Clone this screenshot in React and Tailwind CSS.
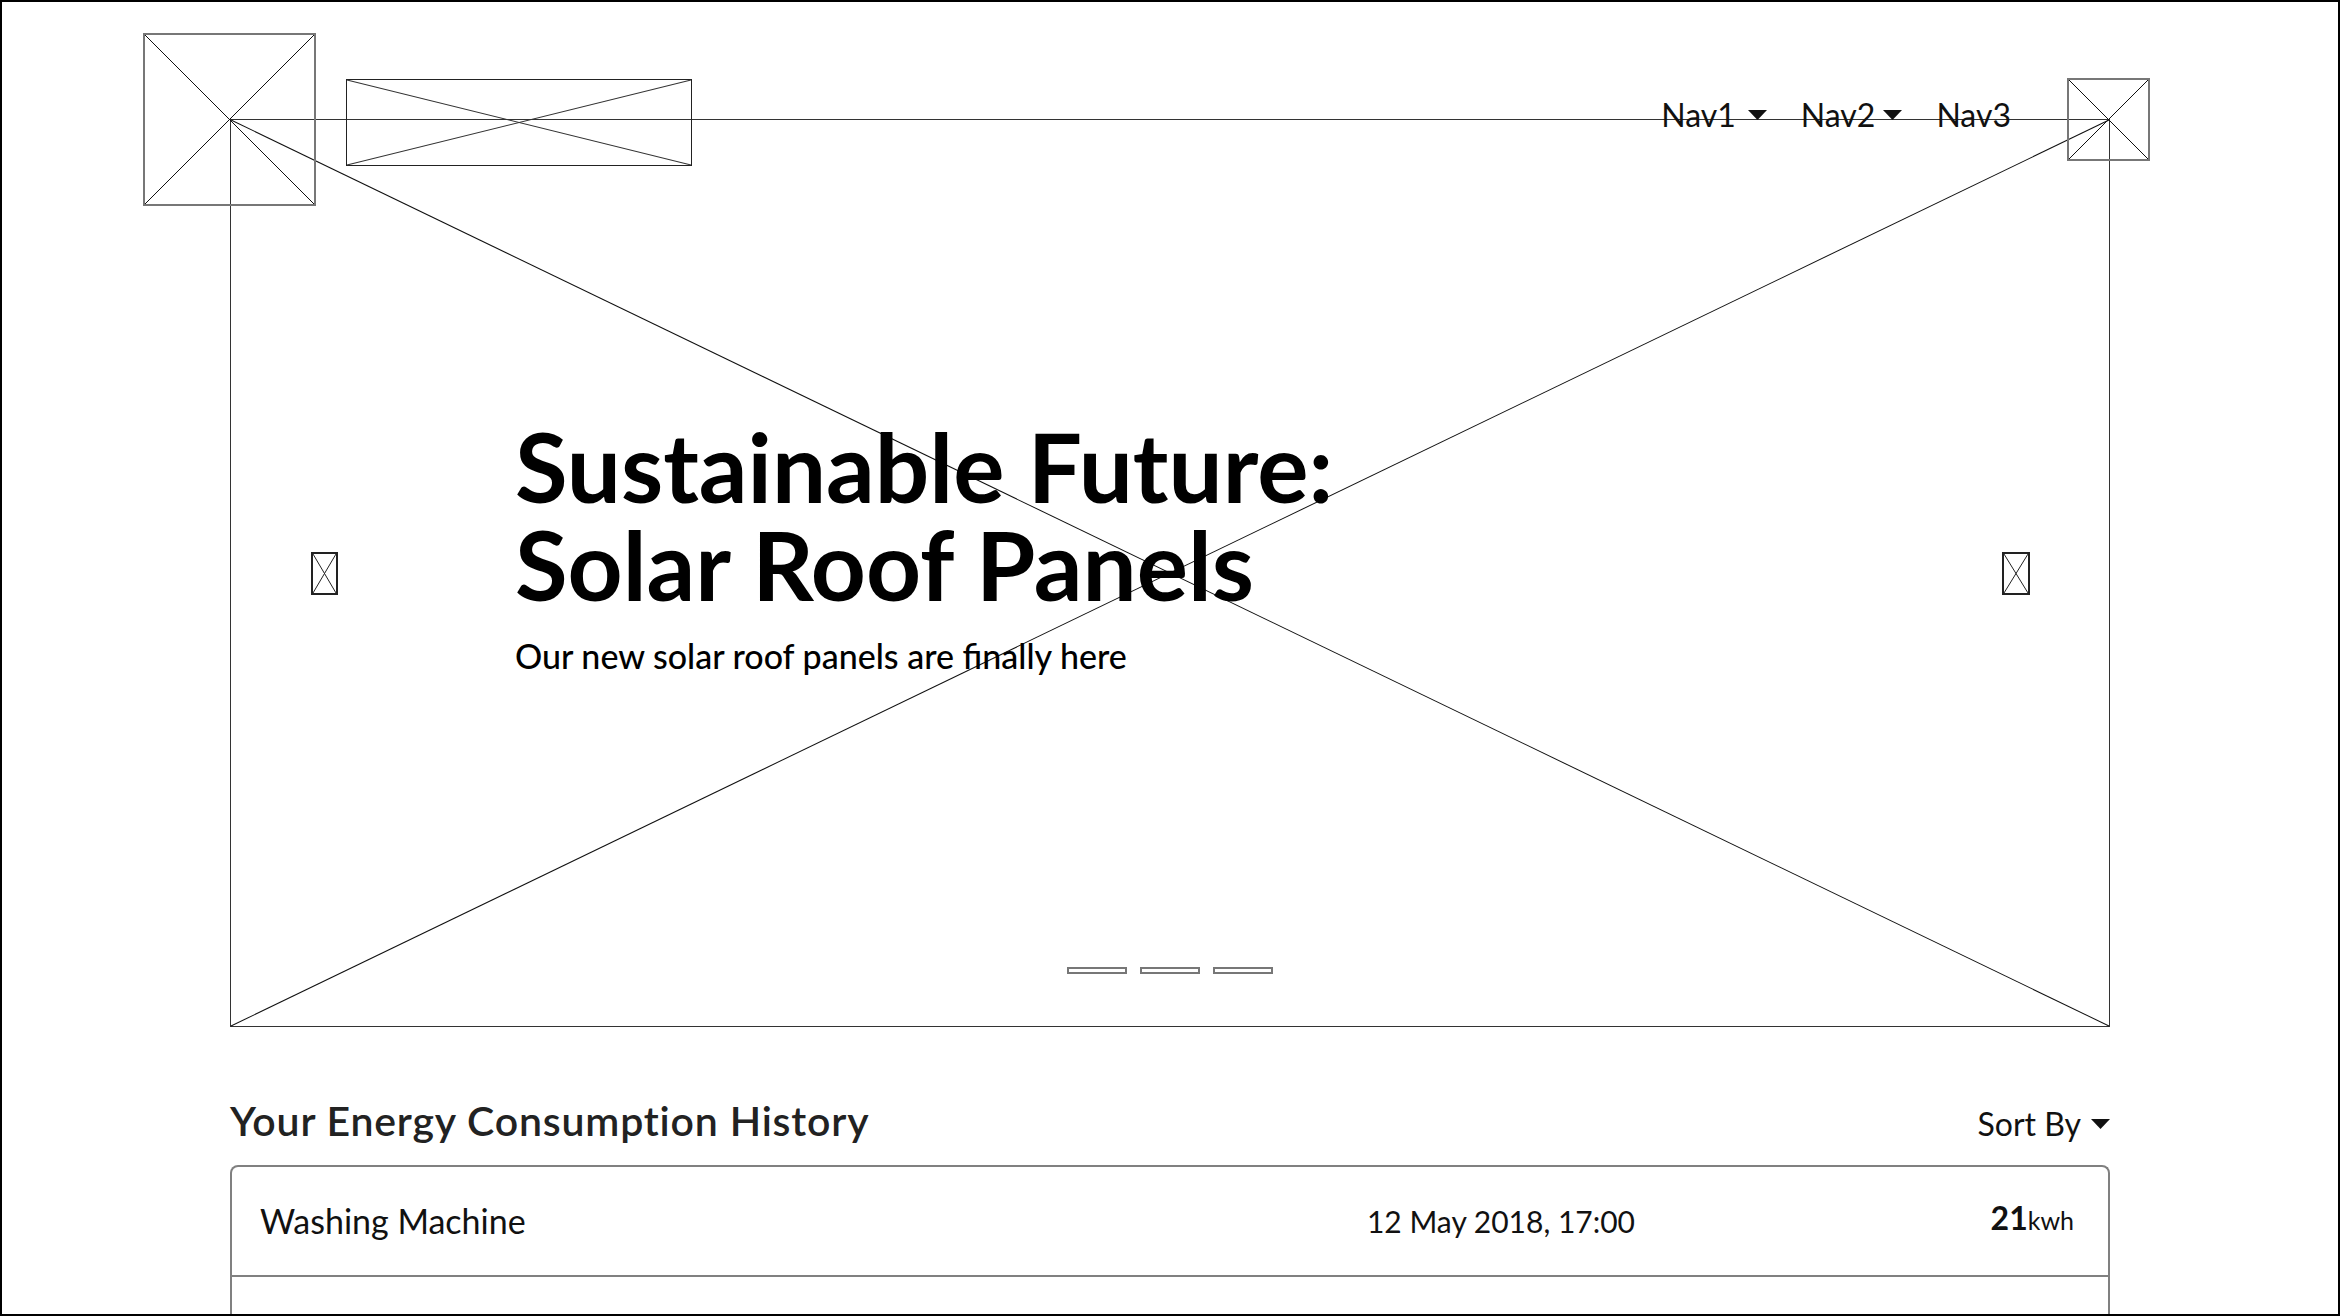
import React from "react";

function Cross({ className = "", stroke = "#000", width = 1 }) {
  return (
    <div className={className}>
      <svg
        className="absolute inset-0 w-full h-full overflow-visible"
        viewBox="0 0 100 100"
        preserveAspectRatio="none"
      >
        <line x1="0" y1="0" x2="100" y2="100" stroke={stroke} strokeWidth={width} vectorEffect="non-scaling-stroke" />
        <line x1="0" y1="100" x2="100" y2="0" stroke={stroke} strokeWidth={width} vectorEffect="non-scaling-stroke" />
      </svg>
    </div>
  );
}

function Caret({ className = "" }) {
  return (
    <svg className={className} width="19" height="10" viewBox="0 0 19 10">
      <polygon points="0,0 19,0 9.5,10" fill="#111" />
    </svg>
  );
}

export default function App() {
  return (
    <div
      className="relative w-[2340px] h-[1316px] overflow-hidden border-2 border-black bg-white text-[#111]"
      style={{ fontFamily: "Lato, 'Noto Sans', sans-serif" }}
    >
      <div className="pt-[117px] px-[228px]">
        {/* Hero */}
        <section className="relative h-[908px] border border-[#333] pt-[297px] pl-[284px]">
          <Cross className="absolute inset-0" stroke="#111" />
          <h1 className="relative text-[96px] leading-[98px] font-bold text-black">
            Sustainable Future:
            <br />
            Solar Roof Panels
          </h1>
          <p className="relative mt-[24px] text-[34px] leading-[38px] font-medium text-black">
            Our new solar roof panels are finally here
          </p>
          <Cross className="absolute left-[80px] top-[432px] w-[27px] h-[43px] border-2 border-[#222]" stroke="#222" />
          <Cross className="absolute right-[79px] top-[432px] w-[28px] h-[43px] border-2 border-[#222]" stroke="#222" />
          <div className="absolute bottom-[52px] left-0 right-0 flex justify-center gap-[13px]">
            <div className="w-[60px] h-[7px] border-2 border-[#777]" />
            <div className="w-[60px] h-[7px] border-2 border-[#777]" />
            <div className="w-[60px] h-[7px] border-2 border-[#777]" />
          </div>
        </section>

        {/* History */}
        <div className="mt-[70px] flex items-baseline justify-between">
          <h2 className="text-[41px] leading-[48px] font-semibold tracking-[0.02em] text-[#222]">
            Your Energy Consumption History
          </h2>
          <button className="flex items-center gap-[10px] text-[32px] leading-[40px] text-[#111]">
            Sort By
            <Caret />
          </button>
        </div>
        <div className="mt-[20px] border-2 border-b-0 border-[#808080] rounded-t-[8px]">
          <div className="flex items-center h-[110px] pl-[28px] pr-[34px] border-b-2 border-[#808080]">
            <div className="flex-1 text-[34px] leading-[40px]">Washing Machine</div>
            <div className="text-[30px] leading-[40px] font-normal text-[#111]">12 May 2018, 17:00</div>
            <div className="w-[439px] text-right leading-[40px]">
              <span className="text-[32px] font-bold">21</span>
              <span className="text-[25px]">kwh</span>
            </div>
          </div>
          <div className="h-[110px] border-b-2 border-[#808080]" />
        </div>
      </div>

      {/* Header overlay */}
      <header className="absolute top-0 left-0 right-0 flex items-start pt-[31px] pl-[141px] pr-[188px]">
        <Cross className="relative w-[173px] h-[173px] border-2 border-[#777]" stroke="#111" />
        <Cross className="relative ml-[30px] mt-[46px] w-[346px] h-[87px] border border-[#222]" stroke="#333" />
        <nav className="ml-auto mt-[62px] flex items-center gap-[34px] h-[40px] text-[32px] leading-[40px]">
          <a className="flex items-center gap-[12px]">
            Nav1
            <Caret />
          </a>
          <a className="flex items-center gap-[8px]">
            Nav2
            <Caret />
          </a>
          <a>Nav3</a>
        </nav>
        <Cross className="relative ml-[56px] mt-[45px] w-[83px] h-[83px] border-2 border-[#777]" stroke="#111" />
      </header>
    </div>
  );
}
